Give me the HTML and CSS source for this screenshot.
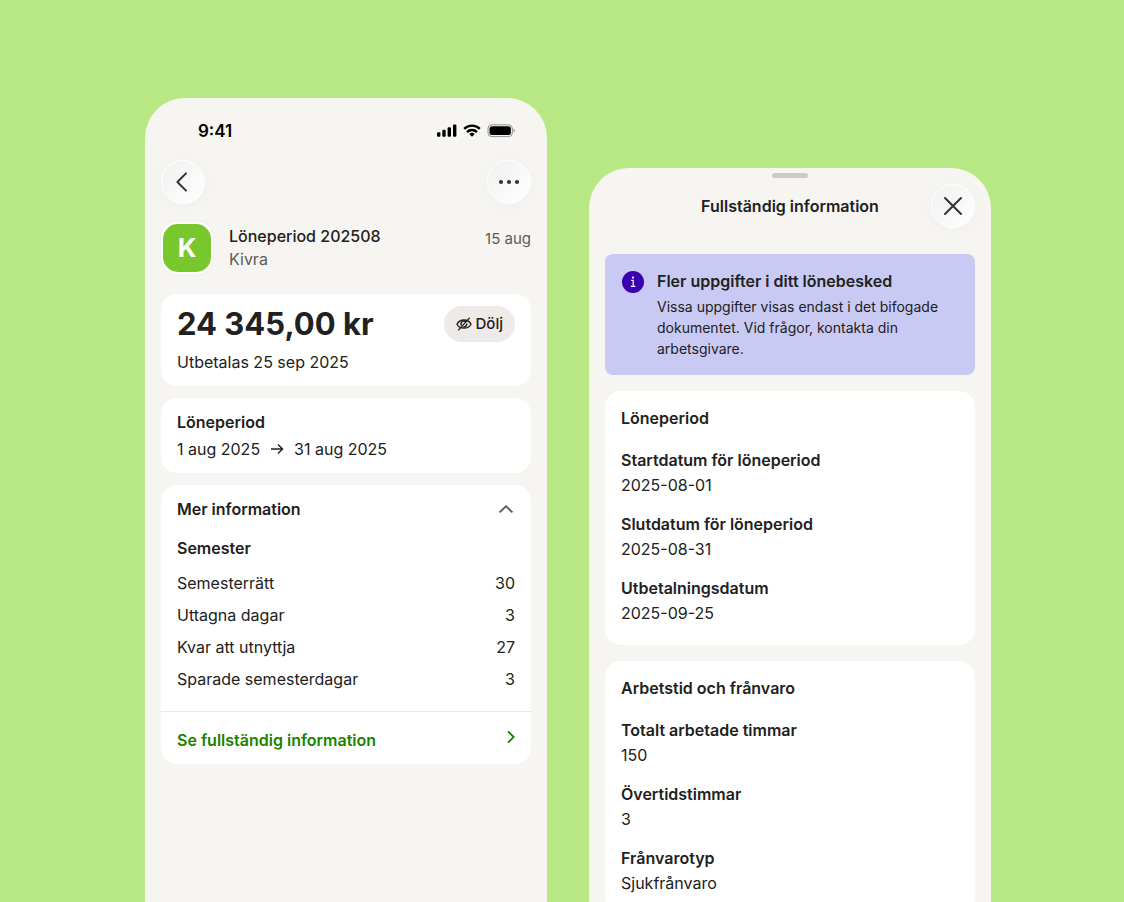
FILE: index.html
```html
<!doctype html>
<html lang="sv">
    <head>
        <meta charset="utf-8">
        <meta name="viewport" content="width=device-width, initial-scale=1">
        <title>Löneperiod 202508</title>
        <link rel="stylesheet" href="styles.css">
    </head>
    <body>
        <main class="stage">
            <!-- Payslip -->
            <section class="phone">
                <div class="status-bar">
                    <span class="time">9:41</span>
                    <svg class="status-icons" width="78" height="14" viewBox="0 0 78 14">
                        <rect x="0" y="8.2" width="3.4" height="4.6" rx="1.1"/>
                        <rect x="5.3" y="5.8" width="3.4" height="7" rx="1.1"/>
                        <rect x="10.6" y="3.2" width="3.4" height="9.6" rx="1.1"/>
                        <rect x="16" y=".4" width="3.4" height="12.4" rx="1.1"/>
                        <g fill="none" stroke="#000" stroke-width="2.4">
                            <path d="M27.2 4.9a11 11 0 0 1 15.6 0"/>
                            <path d="M30 8.1a7 7 0 0 1 10 0"/>
                        </g>
                        <path d="M35 12.8l-2.7-2.8a4 4 0 0 1 5.4 0z"/>
                        <rect x="51" y=".8" width="24.4" height="11.8" rx="3.8" fill="none" stroke="#000" stroke-opacity=".4"/>
                        <rect x="52.5" y="2.3" width="21.4" height="8.8" rx="2.5"/>
                        <path d="M76.6 4.8v3.8c1.5-.7 1.5-3.1 0-3.8z" opacity=".45"/>
                    </svg>
                </div>
                <nav class="nav">
                    <button class="round-btn" type="button" aria-label="Tillbaka">
                        <svg width="24" height="24" viewBox="0 0 24 24"><path d="M15 3.4L6.4 12l8.6 8.6"/></svg>
                    </button>
                    <button class="round-btn" type="button" aria-label="Mer">
                        <svg class="dots" width="24" height="24" viewBox="0 0 24 24"><circle cx="4" cy="12" r="2.1"/><circle cx="12" cy="12" r="2.1"/><circle cx="20" cy="12" r="2.1"/></svg>
                    </button>
                </nav>
                <header class="sender">
                    <div class="logo"><span>K</span></div>
                    <div class="sender-text">
                        <h1>Löneperiod 202508</h1>
                        <p>Kivra</p>
                    </div>
                    <time class="received">15 aug</time>
                </header>
                <div class="cards">
                    <section class="card">
                        <div class="amount-row">
                            <strong class="amount">24 345,00 kr</strong>
                            <button class="hide-btn" type="button">
                                <svg width="16" height="16" viewBox="0 0 16 16"><path d="M1 8.2C3.6 2.6 12.4 2.6 15 8.2 12.4 13.4 3.6 13.4 1 8.2z"/><path d="M5.4 9.4a2.8 2.8 0 0 1 4.2-3.6M10.7 7.4a2.8 2.8 0 0 1-3.5 3.4M13.8 1.6L2.2 14.4"/></svg>
                                Dölj
                            </button>
                        </div>
                        <p class="payout">Utbetalas 25 sep 2025</p>
                    </section>
                    <section class="card">
                        <h2>Löneperiod</h2>
                        <p class="period">
                            <span>1 aug 2025</span>
                            <svg width="14" height="14" viewBox="0 0 14 14"><path d="M1 7h11.6M8 2.4L12.6 7 8 11.6"/></svg>
                            <span>31 aug 2025</span>
                        </p>
                    </section>
                    <section class="card more">
                        <button class="toggle" type="button" aria-expanded="true">
                            Mer information
                            <svg width="16" height="16" viewBox="0 0 16 16"><path d="M1.6 11.4L8 5.2l6.4 6.2"/></svg>
                        </button>
                        <h3>Semester</h3>
                        <table class="days">
                            <tr><th scope="row">Semesterrätt</th><td>30</td></tr>
                            <tr><th scope="row">Uttagna dagar</th><td>3</td></tr>
                            <tr><th scope="row">Kvar att utnyttja</th><td>27</td></tr>
                            <tr><th scope="row">Sparade semesterdagar</th><td>3</td></tr>
                        </table>
                        <a class="full-link" href="#full">
                            Se fullständig information
                            <svg width="8" height="14" viewBox="0 0 8 14"><path d="M1 1.4L6.8 7 1 12.6"/></svg>
                        </a>
                    </section>
                </div>
            </section>

            <!-- Full information sheet -->
            <section class="phone sheet" id="full">
                <div class="grabber"></div>
                <header class="sheet-header">
                    <h2>Fullständig information</h2>
                    <button class="round-btn" type="button" aria-label="Stäng">
                        <svg width="24" height="24" viewBox="0 0 24 24"><path d="M4 4l16 16M20 4L4 20"/></svg>
                    </button>
                </header>
                <aside class="notice">
                    <svg width="22" height="22" viewBox="0 0 22 22">
                        <circle cx="11" cy="11" r="11" fill="#3b00b0"/>
                        <circle cx="11" cy="6.6" r="1.1" fill="#fff"/>
                        <path d="M9.2 9.4h2v5.8M8.8 15.3h4.6" fill="none" stroke="#fff" stroke-width="1.2"/>
                    </svg>
                    <div>
                        <h3>Fler uppgifter i ditt lönebesked</h3>
                        <p>Vissa uppgifter visas endast i det bifogade dokumentet. Vid frågor, kontakta din arbetsgivare.</p>
                    </div>
                </aside>
                <section class="card details">
                    <h3>Löneperiod</h3>
                    <dl>
                        <div><dt>Startdatum för löneperiod</dt><dd>2025-08-01</dd></div>
                        <div><dt>Slutdatum för löneperiod</dt><dd>2025-08-31</dd></div>
                        <div><dt>Utbetalningsdatum</dt><dd>2025-09-25</dd></div>
                    </dl>
                </section>
                <section class="card details">
                    <h3>Arbetstid och frånvaro</h3>
                    <dl>
                        <div><dt>Totalt arbetade timmar</dt><dd>150</dd></div>
                        <div><dt>Övertidstimmar</dt><dd>3</dd></div>
                        <div><dt>Frånvarotyp</dt><dd>Sjukfrånvaro</dd></div>
                    </dl>
                </section>
            </section>
        </main>
    </body>
</html>
```
FILE: styles.css
```css
* {
    box-sizing: border-box;
    margin: 0;
    padding: 0;
}

body {
    background-color: #b8e883;
    color: #212121;
    font-family: Inter, "Liberation Sans", sans-serif;
    font-size: 16px;
    line-height: 24px;
}

button {
    border: none;
    background: none;
    color: inherit;
    font: inherit;
    cursor: pointer;
}

h1, h2, h3, dt {
    font-size: 16px;
    font-weight: 600;
}

svg {
    flex-shrink: 0;
}

.stage {
    display: grid;
    grid-template-columns: 1fr 1fr;
    gap: 42px;
    height: 100vh;
    padding: 98px 133px 0 145px;
    overflow: hidden;
}

.phone {
    background-color: #f7f5f2;
    border-radius: 40px 40px 0 0;
    padding: 0 16px;
}

.status-bar {
    display: flex;
    justify-content: space-between;
    align-items: center;
    padding: 22px 16px 18px 37px;
    line-height: 22px;
    color: #000;
}

.time {
    font-size: 17px;
    font-weight: 600;
}

.nav {
    display: flex;
    justify-content: space-between;
}

.round-btn {
    display: flex;
    align-items: center;
    justify-content: center;
    width: 44px;
    height: 44px;
    border: 1px solid #fff;
    border-radius: 50%;
    background: linear-gradient(135deg, #f0f0f1, #fff);
    box-shadow: 0 2px 20px rgba(0, 0, 0, 0.03);
}

.round-btn svg {
    fill: none;
    stroke: #333;
    stroke-width: 2;
    stroke-linecap: round;
    stroke-linejoin: round;
}

.round-btn .dots {
    fill: #333;
    stroke: none;
}

/* Sender */
.sender {
    display: flex;
    align-items: center;
    gap: 16px;
    margin: 18px 0 20px;
}

.logo {
    width: 52px;
    height: 52px;
    padding: 2px;
    border-radius: 15px;
    background-color: #fff;
    box-shadow: 0 0 3px rgba(0, 0, 0, 0.06);
}

.logo span {
    display: block;
    border-radius: 15px;
    background-color: #78c82d;
    color: #fff;
    font-size: 26px;
    font-weight: 700;
    line-height: 48px;
    text-align: center;
}

.sender-text {
    flex: 1;
    line-height: 23px;
}

.sender-text h1 {
    font-weight: 500;
}

.sender-text p {
    color: #5b5b59;
}

.received {
    align-self: flex-start;
    padding-top: 5px;
    color: #5b5b59;
    font-size: 15px;
}

/* Cards */
.cards {
    display: flex;
    flex-direction: column;
    gap: 12px;
}

.card {
    background-color: #fff;
    border-radius: 16px;
    padding: 12px 16px;
}

.amount-row {
    display: flex;
    justify-content: space-between;
    align-items: center;
    margin-bottom: 8px;
}

.amount {
    font-size: 31px;
    line-height: 36px;
}

.hide-btn {
    display: flex;
    align-items: center;
    gap: 4px;
    height: 36px;
    padding: 0 12px;
    border-radius: 18px;
    background-color: #eeeae7;
    font-size: 15px;
    font-weight: 500;
}

.hide-btn svg,
.period svg,
.toggle svg,
.full-link svg {
    fill: none;
    stroke: currentColor;
    stroke-width: 1.4;
}

.period {
    display: flex;
    align-items: center;
    gap: 10px;
    padding-top: 3px;
}

.more {
    padding-bottom: 0;
}

.toggle {
    display: flex;
    justify-content: space-between;
    align-items: center;
    width: 100%;
    margin-bottom: 15px;
    font-weight: 600;
}

.toggle svg {
    margin-right: 1px;
    color: #555;
    stroke-width: 1.8;
}

.days {
    width: 100%;
    margin: 7px 0 16px;
    border-collapse: collapse;
    line-height: 32px;
}

.days th {
    font-weight: 400;
    text-align: left;
}

.days td {
    text-align: right;
}

.full-link {
    display: flex;
    justify-content: space-between;
    align-items: center;
    margin: 0 -16px;
    padding: 16px 16px 12px;
    border-top: 1px solid #e8e8e6;
    color: #188300;
    font-weight: 600;
    text-decoration: none;
}

.full-link svg {
    margin-bottom: 6px;
    stroke-width: 1.8;
}

/* Sheet */
.sheet {
    margin-top: 70px;
}

.grabber {
    width: 36px;
    height: 5px;
    margin: 5px auto 6px;
    border-radius: 3px;
    background-color: #cccaca;
}

.sheet-header {
    display: grid;
    grid-template-columns: 44px 1fr 44px;
    align-items: center;
    margin-bottom: 26px;
}

.sheet-header h2 {
    grid-column: 2;
    text-align: center;
}

.notice {
    display: flex;
    gap: 13px;
    padding: 15px 16px 16px 17px;
    border-radius: 8px;
    background-color: #c9caf4;
}

.notice svg {
    margin-top: 2px;
}

.notice p {
    padding-top: 3px;
    font-size: 14px;
    line-height: 21px;
}

.details {
    margin-top: 16px;
    padding: 15px 16px 19px;
    line-height: 25px;
}

.details dl {
    display: flex;
    flex-direction: column;
    gap: 14px;
    padding-top: 17px;
}
```
